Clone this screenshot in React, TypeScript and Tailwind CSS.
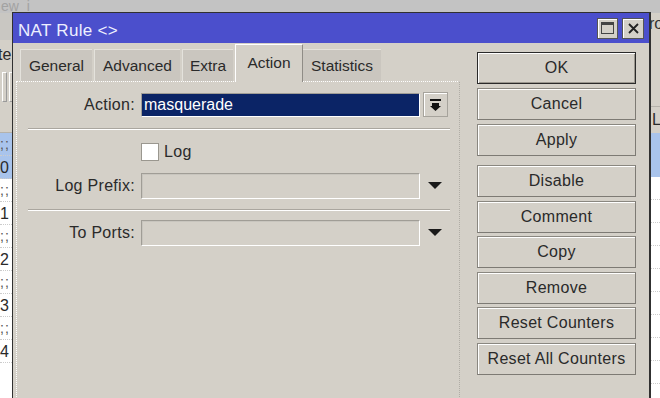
import React from "react";

const font = "font-['Liberation_Sans',Arial,sans-serif]";
const txt = "text-[16px] tracking-[0.3px] text-[#2a2a2a]";

const Btn: React.FC<{ label: string; def?: boolean }> = ({ label, def }) => (
  <div
    className={`h-[32px] w-[159px] flex items-center justify-center bg-[#d4d0c8] ${txt} ${
      def
        ? "border border-[#2a2a2a] shadow-[inset_1px_1px_0_#fff,inset_-1px_-1px_0_#9a968e]"
        : "border border-[#8a8780] shadow-[inset_1px_1px_0_#fff] border-b-[#7d7a74] border-r-[#7d7a74]"
    }`}
  >
    {label}
  </div>
);

const Field: React.FC<{ className?: string }> = ({ className }) => (
  <div
    className={`h-[26px] w-[279px] border border-[#a09d96] border-b-white border-r-white shadow-[inset_1px_1px_0_#c8c5be] ${
      className ?? ""
    }`}
  />
);

const Arrow = () => (
  <svg width="14" height="8" viewBox="0 0 14 8" className="ml-[8px]">
    <path d="M0 0h14L7 7z" fill="#1a1a1a" />
  </svg>
);

const Sep = () => (
  <div className="ml-[11px] w-[422px] h-[2px] border-t border-[#aaa69f] border-b border-b-white" />
);

const Tab: React.FC<{ label: string; w: string }> = ({ label, w }) => (
  <div
    className={`h-[32px] ${w} bg-[#cac6bf] flex items-center justify-center text-[15.5px] text-[#2a2a2a] border-l border-t border-[#e4e2dc]`}
  >
    {label}
  </div>
);

const leftRows = ["0", "1", "2", "3", "4"];

export default function App() {
  return (
    <div className={`${font} relative w-[660px] h-[398px] overflow-hidden bg-[#d4d0c8]`}>
      {/* background app toolbar strip */}
      <div className="absolute left-0 top-0 w-full h-[13px] bg-[#c3c3c3] text-[14px] leading-[12px] text-[#a2a2a2] pl-[1px] whitespace-nowrap overflow-hidden">
        ew &nbsp;i
      </div>

      {/* background app, left edge */}
      <div className="absolute left-0 top-[13px] w-[13px] bottom-0 flex flex-col">
        <div className="h-[27px] bg-[#c9c7c2]" />
        <div className="h-[30px] bg-[#d4d0c8] text-[16px] leading-[30px] text-[#2a2a2a] -ml-[2px]">te</div>
        <div className="h-[33px] flex gap-[2px] items-center pl-[2px] bg-[#d4d0c8]">
          <div className="w-[5px] h-[30px] border border-[#9a9a9a] border-t-white border-l-white" />
          <div className="w-[4px] h-[30px] border border-[#9a9a9a] border-t-white border-l-white" />
        </div>
        <div className="h-[30px] bg-[#d4d0c8] border-b border-[#b5b2ab]" />
        <div className="flex-1 bg-white border-r border-[#8c8c8c]">
          {leftRows.map((n, i) => (
            <div key={n} className={i === 0 ? "bg-[#a9c4ec]" : "bg-white"}>
              <div className="h-[23px] text-[14px] leading-[23px] text-[#555] tracking-[1px] border-b border-dotted border-[#ccc]">
                ;;
              </div>
              <div className="h-[23px] text-[16px] leading-[23px] text-[#2a2a2a] border-b border-dotted border-[#ccc]">
                {n}
              </div>
            </div>
          ))}
        </div>
      </div>

      {/* background app, right edge */}
      <div className="absolute right-0 top-[13px] w-[10px] bottom-0 flex flex-col bg-[#d4d0c8]">
        <div className="h-[22px] text-[16px] leading-[22px] text-[#333] -ml-[1px] overflow-hidden">ro</div>
        <div className="h-[72px] border-b border-[#b5b2ab]" />
        <div className="h-[26px] text-[16px] leading-[26px] text-[#2a2a2a] pl-[2px] overflow-hidden whitespace-nowrap">
          Lis
        </div>
        <div className="h-[44px] bg-[#a9c4ec]" />
        <div className="flex-1 bg-white">
          {[0, 1, 2, 3, 4, 5, 6, 7, 8].map((i) => (
            <div key={i} className="h-[23px] border-b border-dotted border-[#ccc]" />
          ))}
        </div>
      </div>

      {/* dialog */}
      <div className="absolute left-[12px] top-[12px] w-[639px] h-[400px] border border-[#303030] border-r-[2px] bg-[#d4d0c8] flex flex-col">
        <div className="h-[30px] bg-[#4b4fcc] flex items-center pl-[5px] pr-[5px]">
          <span className="text-[17px] text-[#eef0ff] mt-[6px] tracking-[0.3px]">NAT Rule &lt;&gt;</span>
          <div className="ml-auto flex gap-[4px]">
            <div className="w-[21px] h-[21px] bg-[#d4d0c8] border border-[#555] shadow-[inset_1px_1px_0_#fff] flex items-center justify-center">
              <div className="w-[13px] h-[12px] border border-[#444] border-t-[3px]" />
            </div>
            <div className="w-[22px] h-[21px] bg-[#d4d0c8] border border-[#555] shadow-[inset_1px_1px_0_#fff] flex items-center justify-center">
              <svg width="11" height="11" viewBox="0 0 11 11">
                <path d="M1 1l9 9M10 1l-9 9" stroke="#222" strokeWidth="1.8" />
              </svg>
            </div>
          </div>
        </div>

        <div className="flex flex-1">
          {/* left: tabs */}
          <div className="ml-[3px] w-[444px] flex flex-col">
            <div className="h-[38px] flex items-end pl-[4px] gap-[2px]">
              <Tab label="General" w="w-[72px]" />
              <Tab label="Advanced" w="w-[86px]" />
              <Tab label="Extra" w="w-[51px]" />
              <div className="h-[38px] w-[68px] -mb-[1px] bg-[#d4d0c8] flex items-center justify-center text-[15.5px] text-[#2a2a2a] border-l border-t border-white border-r border-r-[#8f8c86] pb-[2px] relative z-10">
                Action
              </div>
              <div className="h-[32px] w-[78px] -ml-[2px] bg-[#cac6bf] flex items-center justify-center text-[15.5px] text-[#2a2a2a] border-t border-[#e4e2dc]">
                Statistics
              </div>
            </div>

            <div className="flex-1 border-l border-t border-white border-r border-r-[#b0ada6] border-dotted flex flex-col">
              <div className="flex items-center mt-[10px]">
                <div className={`w-[118px] text-right ${txt}`}>Action:</div>
                <div className="ml-[6px] h-[24px] w-[279px] bg-[#0b2466] border border-[#a09d96] border-b-white border-r-white text-white text-[16px] leading-[21px] pl-[2px]">
                  masquerade
                </div>
                <div className="ml-[3px] w-[25px] h-[25px] border border-[#a6a39c] shadow-[inset_1px_1px_0_#fff] flex items-center justify-center">
                  <svg width="11" height="12" viewBox="0 0 11 12">
                    <path d="M0 0h11v2H0z M2 4h7v3h2L5.5 12 0 7h2z" fill="#111" />
                  </svg>
                </div>
              </div>

              <div className="mt-[11px]">
                <Sep />
              </div>

              <div className="flex items-center mt-[10px] ml-[124px]">
                <div className="w-[18px] h-[18px] bg-white border border-[#9a978f]" />
                <span className={`ml-[5px] ${txt}`}>Log</span>
              </div>

              <div className="flex items-center mt-[9px]">
                <div className={`w-[118px] text-right ${txt}`}>Log Prefix:</div>
                <Field className="ml-[6px]" />
                <Arrow />
              </div>

              <div className="mt-[10px]">
                <Sep />
              </div>

              <div className="flex items-center mt-[9px]">
                <div className={`w-[118px] text-right ${txt}`}>To Ports:</div>
                <Field className="ml-[6px]" />
                <Arrow />
              </div>
            </div>
          </div>

          {/* right: buttons */}
          <div className="ml-[17px] mt-[9px] flex flex-col">
            <div className="flex flex-col gap-[4px]">
              <Btn label="OK" def />
              <Btn label="Cancel" />
              <Btn label="Apply" />
            </div>
            <div className="mt-[9px] flex flex-col gap-[3.6px]">
              <Btn label="Disable" />
              <Btn label="Comment" />
              <Btn label="Copy" />
              <Btn label="Remove" />
              <Btn label="Reset Counters" />
              <Btn label="Reset All Counters" />
            </div>
          </div>
        </div>
      </div>
    </div>
  );
}
